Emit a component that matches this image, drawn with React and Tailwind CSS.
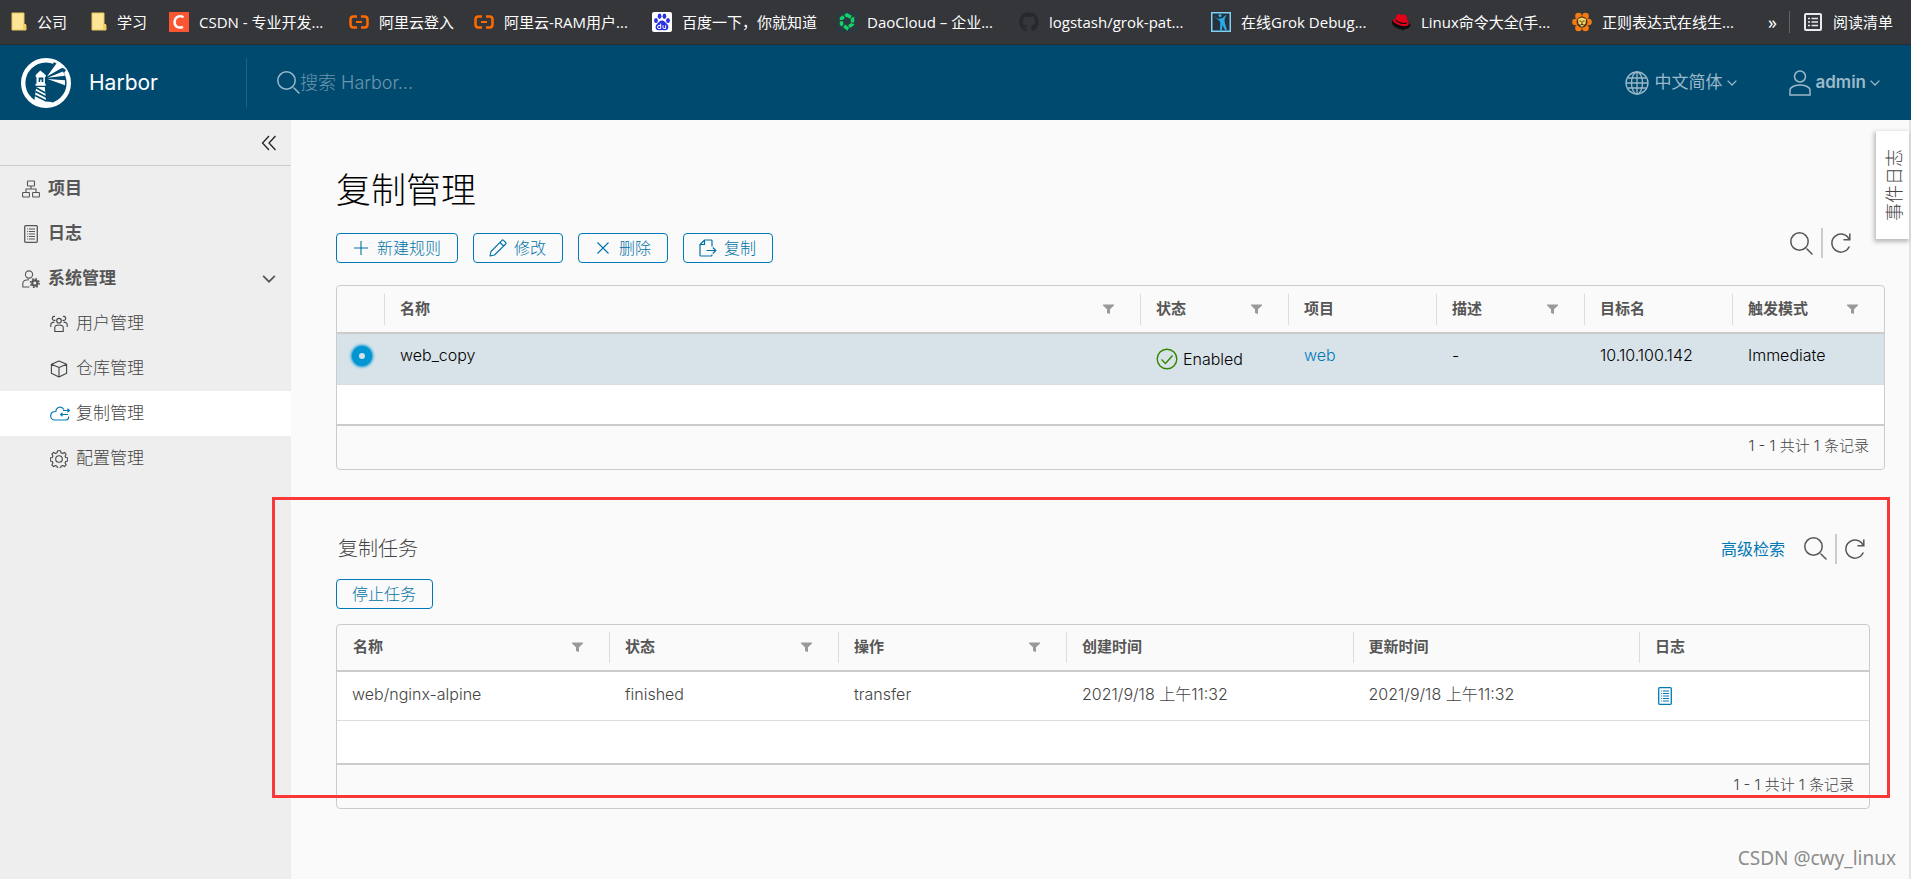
import React, { useState } from "react";
import { FaGithub } from "react-icons/fa";

const FolderIcon = () => (
  <svg className="h-5 w-4" viewBox="0 0 16 20">
    <path d="M1 1h12v12h2v5H1z" fill="#ffe596" stroke="#e8c75a" strokeWidth="1" />
    <path d="M12 18v-6h3v6z" fill="#f3cf63" />
  </svg>
);

const CsdnIcon = () => (
  <svg className="h-5 w-5" viewBox="0 0 20 20">
    <rect width="20" height="20" fill="#fc5531" />
    <path d="M14.500 5.200C11 3 6 4.400 5.600 9.600c-.3 5.600 4.400 7 8.400 5.200" fill="none" stroke="#fff" strokeWidth="2.400" />
  </svg>
);

const AliyunIcon = () => (
  <svg className="h-5 w-5" viewBox="0 0 20 20" fill="none" stroke="#ff6a00" strokeWidth="2.500">
    <path d="M8 4.500H4.500Q1.500 4.500 1.500 7.500v5q0 3 3 3H8M12 4.500h3.500q3 0 3 3v5q0 3-3 3H12" />
    <path d="M7 10h6" strokeWidth="2" />
  </svg>
);

const BaiduIcon = () => (
  <svg className="h-5 w-5" viewBox="0 0 20 20">
    <rect width="20" height="20" rx="2" fill="#fff" />
    <g fill="#2932e1">
      <ellipse cx="4" cy="8.500" rx="1.900" ry="2.500" />
      <ellipse cx="7.600" cy="4.200" rx="1.900" ry="2.700" />
      <ellipse cx="12.400" cy="4.200" rx="1.900" ry="2.700" />
      <ellipse cx="16" cy="8.500" rx="1.900" ry="2.500" />
      <path d="M10 8.500c2.500 0 3.200 2 5 3.600 2.200 2 1.800 6-1.500 6.200-1.400.1-2.300-.4-3.500-.4s-2.100.5-3.500.4c-3.300-.2-3.700-4.200-1.500-6.200C6.800 10.500 7.500 8.500 10 8.500z" />
    </g>
    <path d="M8.700 11.500v5H7a1.500 1.500 0 0 1 0-3h1.700M11 13.300v2.200q0 1 1 1h1.600v-3.200" fill="none" stroke="#fff" strokeWidth="1" />
  </svg>
);

const DaoIcon = () => (
  <svg className="h-5 w-5" viewBox="0 0 20 20">
    <rect width="20" height="20" fill="#2b3a42" />
    <path d="M10 3l5.500 3.200v6L10 16l-5.500-3.800v-6z" fill="none" stroke="#11d468" strokeWidth="3.400" strokeDasharray="4.600 1.400" />
    <path d="M8 15h4l-2 4z" fill="#11d468" />
  </svg>
);

const GrokIcon = () => (
  <svg className="h-5 w-5" viewBox="0 0 20 20">
    <rect x=".75" y=".75" width="18.500" height="18.500" fill="#24323b" stroke="#7fd0f5" strokeWidth="1.500" />
    <circle cx="9" cy="3.600" r="1.500" fill="#35b4f0" />
    <path d="M2.500 4l5 3 4-1 4-3.500-2 5 .3 3.200 2.200 7.300h-2L11.500 13 11 18H9l.3-8-1.500-1.700z" fill="#2aa9ea" />
  </svg>
);

const RedHatIcon = () => (
  <svg className="h-5 w-5" viewBox="0 0 20 20">
    <path d="M1 8.500C0 13 4 15.500 9 17.200l2.500.3V19l1.500-1.500c4-.5 6.500-2.500 6.500-5L17 9z" fill="#0d0d0d" />
    <path d="M4.500 7.500c0-3 1-5.500 3-5.500 1.200 0 1.800.8 3 .6C12.500 2.300 15 2 15.800 5l1 4.500c2.200 1.200 1.500 4-1.500 4.500-4.500.7-10.500-1.500-13-4.500C1 7.800 2.500 6.800 4.500 7.500z" fill="#e3001b" />
    <path d="M4.500 8c2 2.500 7.500 4 11.500 3" fill="none" stroke="#0d0d0d" strokeWidth="1.200" />
  </svg>
);

const LionIcon = () => (
  <svg className="h-5 w-5" viewBox="0 0 20 20">
    <g fill="#f47a12">
      <circle cx="6.500" cy="4" r="3.300" />
      <circle cx="13.500" cy="4" r="3.300" />
      <circle cx="3.500" cy="10" r="3.300" />
      <circle cx="16.500" cy="10" r="3.300" />
      <circle cx="6.500" cy="16" r="3.300" />
      <circle cx="13.500" cy="16" r="3.300" />
    </g>
    <circle cx="10" cy="10" r="5.500" fill="#4a3416" />
    <path d="M6 7l4-1.500L14 7l-.5 4.500L10 15l-3.500-3.500z" fill="#f5d566" />
    <path d="M7.500 9h1.500M11 9h1.500M10 9v3M8.500 12.500h3" stroke="#4a3416" fill="none" />
  </svg>
);

const ReadingListIcon = () => (
  <svg className="h-[18px] w-[18px]" viewBox="0 0 18 18" fill="none" stroke="#e8eaed" strokeWidth="2">
    <rect x="1" y="1" width="16" height="16" rx="1" />
    <path d="M4 5.500h2M4 9h2M4 12.500h2M7.500 5.500H14M7.500 9H14M7.500 12.500H14" strokeWidth="1.500" />
  </svg>
);

const HarborLogo = () => (
  <svg className="h-[50px] w-[50px]" viewBox="0 0 50 50">
    <circle cx="25" cy="25" r="22.800" fill="none" stroke="#fff" strokeWidth="4.400" />
    <path d="M19.300 12.500l5.400 4.600v2h-.8v6.600h.8v2.100H14.500v-2.100h1V19h-.8v-2z" fill="#fff" />
    <path d="M17.600 19.500h4.700v4.600h-1.700v-2.700h-1.400v2.700h-1.600z" fill="#004a70" />
    <path d="M15.200 29h8.600l1.200 14.500 6 .5-2 4.500L13 45z" fill="#fff" />
    <path d="M14.500 29.500l10 5.500M14.500 33.500l10.500 5.500M14.200 37.500l11 5.500" stroke="#004a70" strokeWidth="1.500" />
    <path d="M30 10l3-6 12 8-2 3z" fill="#004a70" />
    <path d="M26 18.500l8.500-11.700 2.500-2.800 5 5.500-3 1.500zM26.500 19.800l15.500-6.300 2 4.200zM26.500 21l17.500 1.200v5z" fill="#fff" />
  </svg>
);

const SearchIcon = () => (
  <svg className="h-[23px] w-[23px]" viewBox="0 0 23 23" fill="none" stroke="currentColor" strokeWidth="1.500" strokeLinecap="round">
    <circle cx="9.500" cy="9.500" r="8.700" />
    <path d="M17 17l5 5" />
  </svg>
);

const RefreshIcon = () => (
  <svg className="h-5 w-5" viewBox="0 0 20 20" fill="none" stroke="currentColor" strokeWidth="1.500" strokeLinecap="round">
    <path d="M18 14A9 9 0 1 1 18 6.200" />
    <path d="M18.800 1v5.800H13" />
  </svg>
);

const GlobeIcon = () => (
  <svg className="h-6 w-6" viewBox="0 0 24 24" fill="none" stroke="currentColor" strokeWidth="1.300">
    <circle cx="12" cy="12" r="11" />
    <ellipse cx="12" cy="12" rx="5.500" ry="11" />
    <path d="M12 1v22M1 12h22M3 7h18M3 17h18" />
  </svg>
);

const UserIcon = () => (
  <svg className="h-[26px] w-[22px]" viewBox="0 0 22 26" fill="none" stroke="currentColor" strokeWidth="1.500">
    <circle cx="11" cy="6.500" r="5.500" />
    <path d="M1 25v-5c0-3.500 6-5 10-5s10 1.500 10 5v5z" />
  </svg>
);

const Caret = ({ className = "h-[6px] w-[10px]" }) => (
  <svg className={className} viewBox="0 0 10 6" fill="none" stroke="currentColor" strokeWidth="1.300">
    <path d="M.6.6L5 5 9.400.6" />
  </svg>
);

const ProjectIcon = () => (
  <svg className="h-[18px] w-[18px]" viewBox="0 0 18 18" fill="none" stroke="currentColor" strokeWidth="1.100">
    <rect x="5.500" y="1" width="7" height="5" rx=".5" />
    <rect x=".6" y="12.500" width="6.800" height="4.500" rx=".5" />
    <rect x="10.600" y="12.500" width="6.800" height="4.500" rx=".5" />
    <path d="M9 6v3M4 12V9h10v3" />
  </svg>
);

const LogIcon = () => (
  <svg className="h-[18px] w-[18px]" viewBox="0 0 18 18" fill="none" stroke="currentColor">
    <rect x="2.700" y=".7" width="12.600" height="16.600" rx="1" strokeWidth="1.300" />
    <path d="M5.200 4h1M5.200 6.500h1M5.200 9h1M5.200 11.500h1M5.200 14h1M7 4h6M7 6.500h6M7 9h6M7 11.500h6M7 14h6" strokeWidth="1.200" />
  </svg>
);

const AdminIcon = () => (
  <svg className="h-[18px] w-[18px]" viewBox="0 0 18 18" fill="none" stroke="currentColor" strokeWidth="1.100">
    <circle cx="7" cy="4.500" r="3.600" />
    <path d="M7.500 17H.8v-3.500c0-2.500 3-3.800 6.200-3.800" />
    <circle cx="12.800" cy="13" r="2.600" strokeWidth="2.200" />
    <circle cx="12.800" cy="13" r="4.300" strokeWidth="1.600" strokeDasharray="1.700 1.677" />
  </svg>
);

const UsersIcon = () => (
  <svg className="h-[18px] w-[18px]" viewBox="0 0 18 18" fill="none" stroke="currentColor" strokeWidth="1.100">
    <circle cx="9" cy="5.700" r="2.300" />
    <path d="M4.800 16.500v-4c0-1.500 2-2.500 4.200-2.500s4.200 1 4.200 2.500v4z" />
    <path d="M5.500 5A2 2 0 1 1 5 1.600M12.500 5a2 2 0 1 0 .5-3.400M4.500 7.200C2.500 7 .8 8 .8 9.500V12M13.500 7.200c2-.2 3.700.8 3.700 2.300V12" />
  </svg>
);

const CubeIcon = () => (
  <svg className="h-[18px] w-[18px]" viewBox="0 0 18 18" fill="none" stroke="currentColor" strokeWidth="1.100" strokeLinejoin="round">
    <path d="M9 1l7.600 3.300v9L9 17l-7.600-3.700v-9zM1.400 4.300L9 7.500l7.600-3.200M9 7.500V17" />
  </svg>
);

const CloudSyncIcon = () => (
  <svg className="h-[18px] w-5" viewBox="0 0 20 18" fill="none" stroke="#0079b8" strokeWidth="1.200">
    <path d="M14 4.500C11.500.8 6.500 1.500 5.800 6.500 2.500 6.500.7 8.500.7 11c0 2.300 1.800 4 4 4h11c2.400 0 3.300-1.600 2.800-3.500" />
    <path d="M13 5.500h6M17.500 3.800l1.800 1.700-1.800 1.700M18 9.500h-7M12.500 7.800l-1.800 1.700 1.800 1.700" />
  </svg>
);

const GearIcon = () => (
  <svg className="h-[18px] w-[18px]" viewBox="0 0 18 18" fill="none" stroke="currentColor" strokeWidth="1.100" strokeLinejoin="round">
    <circle cx="9" cy="9" r="3.300" />
    <path d="M7.500 .8h3l.5 2 1.500.6 1.900-1 1.700 1.800-1 1.800.6 1.500 2 .5v3l-2 .5-.6 1.500 1 1.800-1.700 1.800-1.900-1-1.500.6-.5 2h-3l-.5-2-1.500-.6-1.900 1-1.700-1.800 1-1.800-.6-1.500-2-.5V8l2-.5.600-1.500-1-1.800 1.700-1.800 1.900 1L7 2.800z" />
  </svg>
);

const PlusIcon = () => (
  <svg className="h-[18px] w-[18px]" viewBox="0 0 18 18" fill="none" stroke="currentColor" strokeWidth="1.100">
    <path d="M9 2v14M2 9h14" />
  </svg>
);

const PencilIcon = () => (
  <svg className="h-[18px] w-[18px]" viewBox="0 0 18 18" fill="none" stroke="currentColor" strokeWidth="1.100" strokeLinejoin="round">
    <path d="M1 17l1-4.500L13 1.300q.7-.7 1.500 0l2.200 2.200q.7.8 0 1.500L5.500 16zM11 3.500L14.500 7" />
  </svg>
);

const CrossIcon = () => (
  <svg className="h-[18px] w-[18px]" viewBox="0 0 18 18" fill="none" stroke="currentColor" strokeWidth="1.100">
    <path d="M3.500 3.500l11 11M14.500 3.500l-11 11" />
  </svg>
);

const CopyToIcon = () => (
  <svg className="h-[18px] w-[18px]" viewBox="0 0 18 18" fill="none" stroke="currentColor" strokeWidth="1.200">
    <path d="M13 7.500V2q0-1-1-1H5.500L1 5.500V16q0 1 1 1h10q1 0 1-1v-.5M5.500 1v4.500H1" />
    <path d="M7.500 11.500h9M13.800 8.500l3 3-3 3" />
  </svg>
);

const CheckCircleIcon = () => (
  <svg className="h-[22px] w-[22px]" viewBox="0 0 22 22" fill="none" stroke="#318700" strokeWidth="1.400">
    <circle cx="11" cy="11" r="9.800" />
    <path d="M5.500 11.500l4 4 7-8" />
  </svg>
);

const FilterIcon = () => (
  <svg className="h-[10px] w-[11px]" viewBox="0 0 11 10" fill="#999">
    <path d="M0 .5h11v1L7 5.300v4.700L4 9V5.300L0 1.500z" />
  </svg>
);

const bookmarks = [
  { title: "公司", icon: <FolderIcon />, width: "w-[80px]" },
  { title: "学习", icon: <FolderIcon />, width: "w-[78px]" },
  { title: "CSDN - 专业开发...", icon: <CsdnIcon />, width: "w-[180px]" },
  { title: "阿里云登入", icon: <AliyunIcon />, width: "w-[125px]" },
  { title: "阿里云-RAM用户...", icon: <AliyunIcon />, width: "w-[178px]" },
  { title: "百度一下，你就知道", icon: <BaiduIcon />, width: "w-[185px]" },
  { title: "DaoCloud – 企业...", icon: <DaoIcon />, width: "w-[182px]" },
  { title: "logstash/grok-pat...", icon: <FaGithub className="h-5 w-5 text-[#24292e]" />, width: "w-[192px]" },
  { title: "在线Grok Debug...", icon: <GrokIcon />, width: "w-[180px]" },
  { title: "Linux命令大全(手...", icon: <RedHatIcon />, width: "w-[181px]" },
  { title: "正则表达式在线生...", icon: <LionIcon />, width: "w-[165px]" },
];

const menu = [
  { label: "项目", icon: <ProjectIcon /> },
  { label: "日志", icon: <LogIcon /> },
];

const adminMenu = [
  { label: "用户管理", icon: <UsersIcon /> },
  { label: "仓库管理", icon: <CubeIcon /> },
  { label: "复制管理", icon: <CloudSyncIcon />, active: true },
  { label: "配置管理", icon: <GearIcon /> },
];

const actions = [
  { label: "新建规则", icon: <PlusIcon /> },
  { label: "修改", icon: <PencilIcon /> },
  { label: "删除", icon: <CrossIcon /> },
  { label: "复制", icon: <CopyToIcon /> },
];

const ruleColumns = [
  { label: "名称", filter: true, width: "" },
  { label: "状态", filter: true, width: "w-[148px]" },
  { label: "项目", width: "w-[148px]" },
  { label: "描述", filter: true, width: "w-[148px]" },
  { label: "目标名", width: "w-[148px]" },
  { label: "触发模式", filter: true, width: "w-[152px]" },
];

const taskColumns = [
  { label: "名称", filter: true, width: "w-[272px]" },
  { label: "状态", filter: true, width: "w-[229px]" },
  { label: "操作", filter: true, width: "w-[228px]" },
  { label: "创建时间", width: "" },
  { label: "更新时间", width: "" },
  { label: "日志", width: "w-[230px]" },
];

function BookmarkBar() {
  return (
    <nav className="flex h-[45px] items-center border-b border-[#292a2d] bg-[#35363a] pr-[18px] pl-[11px] font-['Open_Sans','Noto_Sans_CJK_SC',sans-serif] text-[15px] text-white">
      {bookmarks.map((b) => (
        <a key={b.title} href="#" className={`flex shrink-0 items-center gap-[10px] whitespace-nowrap ${b.width}`}>
          <span className="shrink-0">{b.icon}</span>
          {b.title}
        </a>
      ))}
      <button className="ml-auto px-3 text-[18px]" aria-label="更多书签">»</button>
      <button className="flex shrink-0 items-center gap-[11px] border-l border-[#5f6368] pl-[14px] whitespace-nowrap">
        <ReadingListIcon />
        阅读清单
      </button>
    </nav>
  );
}

function Header() {
  return (
    <header className="flex h-[75px] items-center bg-[#004a70] text-[#9bb9c8]">
      <a href="#" className="flex w-[246px] items-center gap-[18px] pl-[21px] text-[21px] text-white">
        <HarborLogo />
        Harbor
      </a>
      <label className="flex h-[50px] flex-1 items-center border-l border-[#1f6080] pl-[30px]">
        <SearchIcon />
        <input
          type="text"
          placeholder="搜索 Harbor..."
          aria-label="搜索"
          className="w-80 bg-transparent text-[18px] font-light outline-none placeholder:text-[#6b96ac]"
        />
      </label>
      <button className="flex items-center gap-[5px] text-[17px]">
        <GlobeIcon />
        中文简体
        <Caret />
      </button>
      <button className="mr-[31px] ml-[52px] flex items-center gap-[4px] text-[17px] font-semibold">
        <UserIcon />
        admin
        <Caret />
      </button>
    </header>
  );
}

function Sidebar() {
  const [open, setOpen] = useState(true);
  return (
    <aside className="w-[291px] shrink-0 bg-[#eee] text-[17px] text-[#565656]">
      <div className="flex h-[46px] items-center justify-end border-b border-[#ccc] pr-[14px] text-[#222]">
        <button aria-label="收起菜单">
          <svg className="h-4 w-4" viewBox="0 0 16 16" fill="none" stroke="currentColor" strokeWidth="1.300">
            <path d="M8 1L1.500 8 8 15M14.500 1L8 8l6.500 7" />
          </svg>
        </button>
      </div>
      {menu.map((item) => (
        <a key={item.label} href="#" className="flex h-[45px] items-center gap-[8px] pl-[22px] font-bold">
          {item.icon}
          {item.label}
        </a>
      ))}
      <button
        onClick={() => setOpen(!open)}
        className="flex h-[45px] w-full items-center gap-[8px] pr-[15px] pl-[22px] font-bold"
      >
        <AdminIcon />
        系统管理
        <Caret className="ml-auto h-2 w-[14px]" />
      </button>
      {open &&
        adminMenu.map((item) => (
          <a
            key={item.label}
            href="#"
            className={`flex h-[45px] items-center pl-[50px] font-light text-[#444] ${item.active ? "bg-white" : ""}`}
          >
            <span className="w-[26px]">{item.icon}</span>
            {item.label}
          </a>
        ))}
    </aside>
  );
}

function OutlineButton({ icon, children }) {
  return (
    <button className="flex h-[30px] items-center gap-[7px] rounded-[4px] border border-[#0079b8] pr-4 pl-[15px] text-[16px] font-light text-[#0072a8]">
      {icon}
      {children}
    </button>
  );
}

function GridTools() {
  return (
    <div className="flex h-[30px] items-center text-[#565656]">
      <button aria-label="搜索">
        <SearchIcon />
      </button>
      <span className="mx-[8px] h-full w-[2px] bg-[#ccc]" />
      <button aria-label="刷新">
        <RefreshIcon />
      </button>
    </div>
  );
}

function ColumnHeaders({ columns, divideFirst }) {
  return columns.map((c, i) => (
    <th key={c.label} className={`h-[46px] p-0 ${c.width}`}>
      <div
        className={`flex h-[31px] items-center justify-between border-l pr-[26px] pl-[15px] ${
          i > 0 || divideFirst ? "border-[#ddd]" : "border-transparent"
        }`}
      >
        {c.label}
        {c.filter && (
          <button aria-label={`筛选${c.label}`}>
            <FilterIcon />
          </button>
        )}
      </div>
    </th>
  ));
}

// fill: height of the empty area under the rows
function GridFrame({ fill, children }) {
  return (
    <div className="overflow-hidden rounded-[4px] border border-[#ccc]">
      {children}
      <div className={`bg-white ${fill}`} />
      <div className="flex h-[45px] items-center justify-end border-t-2 border-[#ccc] pr-[15px] pb-[2px] text-[15px] font-light text-[#444]">
        1 - 1 共计 1 条记录
      </div>
    </div>
  );
}

function RuleGrid() {
  return (
    <GridFrame fill="h-[39px]">
      <table className="w-full table-fixed border-collapse text-left">
        <thead className="border-b-2 border-[#ccc] text-[15px] font-semibold">
          <tr>
            <th className="h-[47px] w-[47px] p-0" aria-label="选择" />
            <ColumnHeaders columns={ruleColumns} divideFirst />
          </tr>
        </thead>
        <tbody>
          <tr className="h-[51px] border-b border-[#ddd] bg-[#d8e3e9] align-top font-light text-black">
            <td className="pt-[12px] pl-[15px]">
              <input
                type="radio"
                name="rule"
                defaultChecked
                aria-label="web_copy"
                className="block h-5 w-5 appearance-none rounded-full border-[7px] border-[#0095d3] bg-[#d8e3e9] shadow-[0_0_3px_1px_#0095d3]"
              />
            </td>
            <td className="pt-[9px] pl-4">web_copy</td>
            <td className="pt-[13px] pl-4">
              <span className="flex items-center gap-[5px]">
                <CheckCircleIcon />
                Enabled
              </span>
            </td>
            <td className="pt-[9px] pl-4">
              <a href="#" className="text-[#0079b8]">web</a>
            </td>
            <td className="pt-[9px] pl-4">-</td>
            <td className="pt-[9px] pl-4">10.10.100.142</td>
            <td className="pt-[9px] pl-4">Immediate</td>
          </tr>
        </tbody>
      </table>
    </GridFrame>
  );
}

function TaskGrid() {
  return (
    <GridFrame fill="h-[42px]">
      <table className="w-full table-fixed border-collapse text-left">
        <thead className="border-b-2 border-[#ccc] text-[15px] font-semibold">
          <tr>
            <ColumnHeaders columns={taskColumns} />
          </tr>
        </thead>
        <tbody>
          <tr className="h-[50px] border-b border-[#ddd] bg-white align-top font-light text-[#444]">
            <td className="pt-[10px] pl-[15px]">web/nginx-alpine</td>
            <td className="pt-[10px] pl-4">finished</td>
            <td className="pt-[10px] pl-4">transfer</td>
            <td className="pt-[10px] pl-4">2021/9/18 上午11:32</td>
            <td className="pt-[10px] pl-4">2021/9/18 上午11:32</td>
            <td className="pt-[15px] pl-[17px] text-[#0079b8]">
              <a href="#" aria-label="查看日志" className="block w-[18px]">
                <LogIcon />
              </a>
            </td>
          </tr>
        </tbody>
      </table>
    </GridFrame>
  );
}

export default function App() {
  return (
    <div className="relative flex min-h-screen flex-col bg-[#fafafa] font-['Inter','Noto_Sans_CJK_SC',sans-serif] text-[16px] text-[#565656]">
      <BookmarkBar />
      <Header />
      <div className="flex flex-1">
        <Sidebar />
        <main className="relative min-w-0 flex-1 border-r-2 border-[#e4e4e4] pt-[45px] pr-6 pl-[45px]">
          <h1 className="text-[35px] leading-[50px] font-extralight text-black">复制管理</h1>
          <div className="mt-[13px] mb-[22px] flex items-start justify-between pr-[34px]">
            <div className="flex gap-[15px] pt-[5px]">
              {actions.map((a) => (
                <OutlineButton key={a.label} icon={a.icon}>
                  {a.label}
                </OutlineButton>
              ))}
            </div>
            <GridTools />
          </div>
          <RuleGrid />

          <section className="relative mt-[64px] mr-[15px]">
            <div className="flex h-[30px] items-center">
              <h2 className="pl-[2px] text-[20px] font-light text-[#444]">复制任务</h2>
              <button className="mr-[19px] ml-auto text-[16px] text-[#0079b8]">高级检索</button>
              <div className="pr-[5px]">
                <GridTools />
              </div>
            </div>
            <div className="my-[15px] flex">
              <OutlineButton>停止任务</OutlineButton>
            </div>
            <TaskGrid />
            {/* Highlight frame over the task list */}
            <div className="pointer-events-none absolute -top-[37px] -right-5 bottom-[11px] -left-16 border-[3px] border-[#fb3838]" />
          </section>

          {/* Event log tab pinned to the right edge */}
          <button className="absolute top-[11px] right-0 flex h-[108px] w-[33px] items-center justify-center bg-white pl-[3px] text-[18px] font-light text-[#444] shadow-[-1px_2px_4px_1px_#bbb]">
            <span className="rotate-180 [text-orientation:sideways] [writing-mode:vertical-rl]">事件日志</span>
          </button>
        </main>
      </div>
      <div className="absolute right-[15px] bottom-[7px] font-['Noto_Sans',sans-serif] text-[19px] text-[#8c8c8c]">
        CSDN @cwy_linux
      </div>
    </div>
  );
}
